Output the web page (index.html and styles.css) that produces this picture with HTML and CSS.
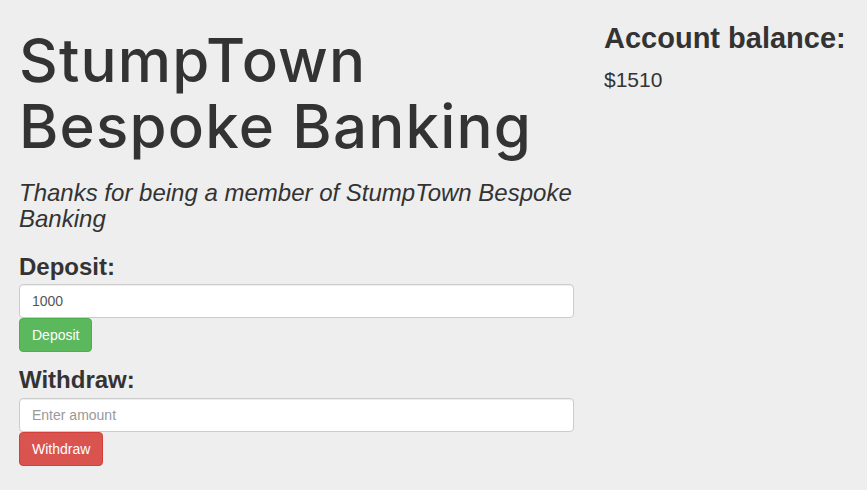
FILE: index.html
```html
<!DOCTYPE html>
<html lang="en">
<head>
<meta charset="utf-8">
<title>StumpTown Bespoke Banking</title>
<link rel="stylesheet" href="styles.css">
</head>
<body>
<div class="page">
  <main class="main-col">
    <h1 class="title">StumpTown Bespoke Banking</h1>
    <h3 class="subtitle">Thanks for being a member of StumpTown Bespoke Banking</h3>
    <div class="field">
      <label class="field-label" for="deposit">Deposit:</label>
      <input class="form-control" id="deposit" type="text" value="1000" placeholder="Enter amount">
      <button class="btn btn-success" type="button">Deposit</button>
    </div>
    <div class="field field-next">
      <label class="field-label" for="withdraw">Withdraw:</label>
      <input class="form-control" id="withdraw" type="text" placeholder="Enter amount">
      <button class="btn btn-danger" type="button">Withdraw</button>
    </div>
  </main>
  <aside class="side-col">
    <h2 class="balance-title">Account balance:</h2>
    <p class="lead">$1510</p>
  </aside>
</div>
</body>
</html>
```
FILE: styles.css
```css
html, body {
  margin: 0;
  padding: 0;
}
body {
  background: #eeeeee;
  color: #333333;
  font-family: "Liberation Sans", Arial, Helvetica, sans-serif;
  font-size: 14px;
  line-height: 1.42857;
}
.page {
  display: flex;
  align-items: flex-start;
  gap: 30px;
  padding-left: 19px;
}
.main-col {
  width: 555px;
  flex: none;
}
.side-col {
  flex: 1;
}
.title {
  margin: 27px 0 0;
  font-family: Inter, "Liberation Sans", Arial, sans-serif;
  font-size: 60px;
  line-height: 1.1;
  font-weight: 500;
  letter-spacing: 1.2px;
}
.subtitle {
  margin: 21px 0 0;
  font-size: 24px;
  line-height: 1.1;
  font-weight: 400;
  font-style: italic;
}
.field {
  display: flex;
  flex-direction: column;
  align-items: flex-start;
  margin-top: 21px;
}
.field-next {
  margin-top: 15px;
}
.field-label {
  font-size: 24px;
  line-height: 1.1;
  font-weight: 700;
  margin-bottom: 4px;
}
.form-control {
  box-sizing: border-box;
  width: 100%;
  height: 34px;
  margin: 0;
  padding: 6px 12px;
  font-family: inherit;
  font-size: 14px;
  line-height: 20px;
  color: #555555;
  background: #ffffff;
  border: 1px solid #cccccc;
  border-radius: 4px;
  box-shadow: inset 0 1px 1px rgba(0, 0, 0, 0.075);
  outline: none;
}
.form-control::placeholder {
  color: #999999;
}
.btn {
  box-sizing: border-box;
  height: 34px;
  margin: 0;
  padding: 6px 12px;
  font-family: inherit;
  font-size: 14px;
  line-height: 20px;
  color: #ffffff;
  border: 1px solid transparent;
  border-radius: 4px;
  cursor: pointer;
}
.btn-success {
  background: #5cb85c;
  border-color: #4cae4c;
}
.btn-danger {
  background: #d9534f;
  border-color: #d43f3a;
}
.balance-title {
  margin: 23px 0 0;
  font-size: 29px;
  line-height: 1.1;
  font-weight: 700;
}
.lead {
  margin: 10px 0 0;
  font-size: 21px;
  line-height: 1.42857;
  font-weight: 300;
}
```
